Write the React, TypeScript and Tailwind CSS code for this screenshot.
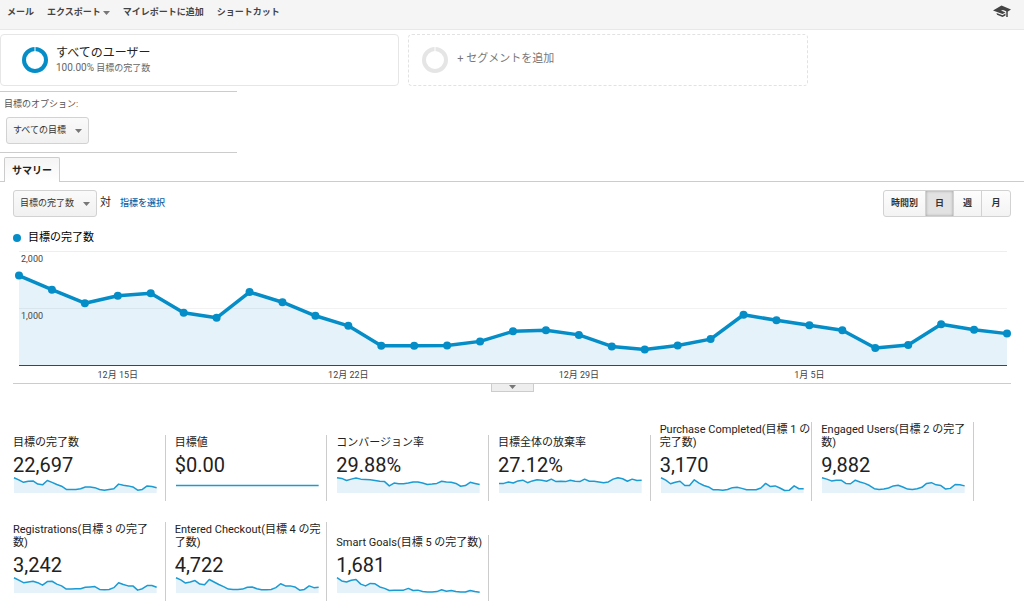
const cjk = "font-[Roboto,'Noto_Sans_CJK_JP',sans-serif]";

const completions = [
  1586, 1339, 1101, 1233, 1277, 934, 846, 1297, 1119, 881, 705, 357, 355, 361, 432, 608,
  626, 546, 344, 291, 361, 472, 899, 802, 714, 626, 317, 370, 732, 635, 568,
];

const dateLabels = [
  { index: 3, label: "12月 15日" },
  { index: 10, label: "12月 22日" },
  { index: 17, label: "12月 29日" },
  { index: 24, label: "1月 5日" },
];

interface Metric { title: string; value: string; trend: number[]; flat?: boolean }

// trend values are distances from the top of a 45 unit high sparkline
const metrics: Metric[] = [
  { title: "目標の完了数", value: "22,697", trend: [2, 8, 15, 12, 11, 20, 22, 10, 15, 21, 26, 35, 35, 35, 33, 28, 28, 30, 35, 37, 35, 33, 20, 23, 25, 28, 37, 35, 25, 27, 30] },
  { title: "目標値", value: "$0.00", trend: [24, 24], flat: true },
  { title: "コンバージョン率", value: "29.88%", trend: [2, 4, 10, 6, 3, 6, 7, 8, 10, 12, 13, 25, 17, 19, 19, 17, 14, 14, 17, 21, 20, 18, 12, 14, 15, 18, 26, 24, 15, 18, 21] },
  { title: "目標全体の放棄率", value: "27.12%", trend: [18, 18, 14, 17, 11, 9, 16, 11, 8, 9, 12, 6, 13, 12, 13, 9, 12, 13, 6, 12, 12, 14, 16, 14, 6, 2, 5, 12, 6, 10, 9] },
  { title: "Purchase Completed(目標 1 の\n完了数)", value: "3,170", trend: [2, 9, 19, 15, 12, 24, 24, 8, 17, 24, 28, 36, 36, 37, 35, 30, 29, 32, 36, 36, 36, 31, 18, 27, 25, 31, 38, 37, 25, 33, 33] },
  { title: "Engaged Users(目標 2 の完了\n数)", value: "9,882", trend: [2, 6, 11, 9, 9, 18, 19, 9, 14, 18, 24, 33, 35, 34, 31, 25, 23, 28, 34, 35, 33, 29, 18, 16, 22, 24, 34, 32, 21, 22, 25] },
  { title: "Registrations(目標 3 の完了\n数)", value: "3,242", trend: [2, 9, 16, 14, 12, 16, 23, 13, 12, 20, 25, 34, 34, 33, 33, 29, 28, 27, 35, 36, 35, 30, 16, 21, 25, 25, 37, 33, 24, 24, 29] },
  { title: "Entered Checkout(目標 4 の完\n了数)", value: "4,722", trend: [2, 8, 17, 14, 10, 20, 22, 7, 14, 21, 27, 34, 35, 35, 34, 29, 28, 33, 36, 36, 35, 30, 19, 25, 25, 28, 37, 35, 25, 30, 29] },
  { title: "Smart Goals(目標 5 の完了数)", value: "1,681", trend: [2, 11, 14, 9, 7, 20, 25, 18, 19, 28, 32, 38, 37, 37, 37, 32, 38, 37, 41, 42, 42, 41, 36, 40, 38, 41, 42, 42, 38, 41, 43] },
];

function Caret() {
  return (
    <svg width="7" height="4" viewBox="0 0 7 4" className="shrink-0" aria-hidden="true">
      <path d="M0 0h7L3.5 4z" fill="#777" />
    </svg>
  );
}

function Ring({ color }: { color: string }) {
  return (
    <svg width="26" height="26" viewBox="0 0 26 26" className="shrink-0" aria-hidden="true">
      <circle cx="13" cy="13" r="11" fill="none" stroke={color} strokeWidth="4" />
      <path d="M13 0v4" stroke="#fff" strokeWidth="1" />
    </svg>
  );
}

function DropButton({ label }: { label: string }) {
  return (
    <button className="flex h-[27px] items-center gap-[9px] rounded-[3px] border border-[#d2d2d2] bg-linear-to-b from-[#fafafa] to-[#f1f1f1] px-[6px] text-[9px] text-[#333]">
      {label}
      <Caret />
    </button>
  );
}

function Sparkline({ trend, flat }: { trend: number[]; flat?: boolean }) {
  const points = trend.map((y, i) => `${(i * 300) / (trend.length - 1)},${y}`).join(" ");
  return (
    <svg viewBox="0 0 300 45" preserveAspectRatio="none" className="block h-4 w-full overflow-visible" aria-hidden="true">
      {!flat && <polygon points={`0,45 ${points} 300,45`} fill="#e5f2fa" />}
      <polyline points={points} fill="none" stroke="#1c9bd3" strokeWidth="1.5" strokeLinejoin="round" vectorEffect="non-scaling-stroke" />
    </svg>
  );
}

function TrendChart() {
  const last = completions.length - 1;
  const x = (i: number) => `${(i / last) * 100}%`;
  const y = (v: number) => 115 - (v * 114) / 2000;
  const points = completions.map((v, i) => `${(i / last) * 1000},${y(v)}`).join(" ");
  return (
    <svg className="block h-[132px] w-full overflow-visible" role="img" aria-label="目標の完了数">
      <line x1="0" x2="100%" y1="0.5" y2="0.5" stroke="#eee" />
      <svg width="100%" height="114" viewBox="0 0 1000 114" preserveAspectRatio="none" className="overflow-visible">
        <polygon points={`0,114 ${points} 1000,114`} fill="#e5f2fa" />
      </svg>
      <line x1="0" x2="100%" y1="57.5" y2="57.5" stroke="#000" strokeOpacity="0.05" />
      <line x1="0" x2="100%" y1="114.5" y2="114.5" stroke="#444" />
      <svg width="100%" height="114" viewBox="0 0 1000 114" preserveAspectRatio="none" className="overflow-visible">
        <polyline points={points} fill="none" stroke="#058dc7" strokeWidth="3.5" strokeLinejoin="round" vectorEffect="non-scaling-stroke" />
      </svg>
      {completions.map((v, i) => <circle key={i} cx={x(i)} cy={y(v)} r="4" fill="#058dc7" />)}
      <g fontSize="9" fill="#444">
        <text x="2" y="11">2,000</text>
        <text x="2" y="68">1,000</text>
        {dateLabels.map((d) => <text key={d.label} x={x(d.index)} y="127" textAnchor="middle">{d.label}</text>)}
      </g>
    </svg>
  );
}

export default function App() {
  return (
    <div className={`${cjk} bg-white text-[#222]`}>
      <header className="flex h-[30px] items-start justify-between border-b border-[#e8e8e8] bg-[#f5f5f5] pr-[13px] pl-[7px]">
        <nav className="flex h-[26px] items-center gap-[13px] text-[9px] font-bold text-[#444]">
          <button>メール</button>
          <button className="flex items-center gap-[2px]">エクスポート<Caret /></button>
          <button>マイレポートに追加</button>
          <button>ショートカット</button>
        </nav>
        <button aria-label="ヘルプ" className="mt-[5px]">
          <svg width="18" height="13" viewBox="0 0 18 13" aria-hidden="true">
            <path d="M0 5.500L8.500 0.500L18 4.500L14.500 6.800L10 5L8 5.500L12.500 7.500L9.500 9z" fill="#444" />
            <path d="M3.500 8L9.500 10.300L12.500 8.500V10.500L9.500 12L4 9.800z" fill="#444" />
            <path d="M14 6V12" stroke="#444" strokeWidth="1.500" />
          </svg>
        </button>
      </header>

      <section className="flex gap-[9px] pt-1">
        <button className="flex h-[52px] w-[39%] items-center gap-2 rounded-[4px] border border-[#e6e6e6] pl-[21px] text-left">
          <Ring color="#058dc7" />
          <span className="flex flex-col">
            <span className="text-[12px] leading-[16px]">すべてのユーザー</span>
            <span className="text-[9px] leading-[14px] text-[#666]"><span className="text-[10px]">100.00%</span> 目標の完了数</span>
          </span>
        </button>
        <button className="flex h-[52px] w-[39%] items-center gap-[9px] rounded-[4px] border border-dashed border-[#e2e2e2] pl-[13px] text-[11px] text-[#777]">
          <Ring color="#e5e5e5" />
          <span className="pb-[2px]">+ セグメントを追加</span>
        </button>
      </section>

      <section className="mt-[5px] w-[237px] border-y border-[#ccc] pb-2">
        <p className="pt-[5px] pl-1 text-[9px] leading-[14px] text-[#555]">目標のオプション:</p>
        <div className="mt-[6px] pl-[6px]"><DropButton label="すべての目標" /></div>
      </section>

      <div className="mt-1 flex border-b border-[#ccc] pl-1">
        <button className="-mb-px h-[25px] rounded-t-[2px] border border-b-0 border-[#ccc] bg-linear-to-b from-[#f5f5f5] to-white px-[7px] text-[10px] font-bold text-[#222]">サマリー</button>
      </div>

      <div className="flex items-center justify-between pt-2 pr-[13px] pl-[13px]">
        <div className="flex items-center">
          <DropButton label="目標の完了数" />
          <span className="ml-[3px] text-[11px]">対</span>
          <a href="#metric" className="ml-[9px] text-[9px] font-medium text-[#0b62a4]">指標を選択</a>
        </div>
        <div className="flex h-[27px] divide-x divide-[#d2d2d2] overflow-hidden rounded-[3px] border border-[#d2d2d2] bg-linear-to-b from-[#fdfdfd] to-[#f3f3f3] text-[9px] font-bold text-[#333]">
          <button className="w-[42px]">時間別</button>
          <button className="w-7 bg-[#e2e2e2] shadow-[inset_0_0_3px_#999]" aria-pressed="true">日</button>
          <button className="w-7">週</button>
          <button className="w-7">月</button>
        </div>
      </div>

      <div className="mt-3 flex items-center gap-[7px] pl-[13px] text-[11px] leading-[18px] text-black">
        <span className="size-2 rounded-full bg-[#058dc7]" />
        目標の完了数
      </div>

      <div className="mr-[13px] ml-[13px] border-b border-[#ccc] pt-1 pr-1 pl-[6px]">
        <TrendChart />
      </div>
      <div className="flex justify-center">
        <button aria-label="展開" className="flex h-2 w-[43px] items-start justify-center border border-t-0 border-[#ccc] bg-[#eee] pt-px"><Caret /></button>
      </div>

      <section className="mt-[30px] mr-[50px] ml-1 grid grid-cols-6 items-end gap-y-[21px] pb-[6px]">
        {metrics.map((m) => (
          <div key={m.value} className="border-r border-[#ccc] pt-px pr-2 pb-2 pl-[9px]">
            <h3 className="text-[11px] leading-[13px] whitespace-pre text-[#222]">{m.title}</h3>
            <p className="mt-1 text-[20px] leading-[24px]">{m.value}</p>
            <div className="pl-px"><Sparkline trend={m.trend} flat={m.flat} /></div>
          </div>
        ))}
      </section>
    </div>
  );
}
